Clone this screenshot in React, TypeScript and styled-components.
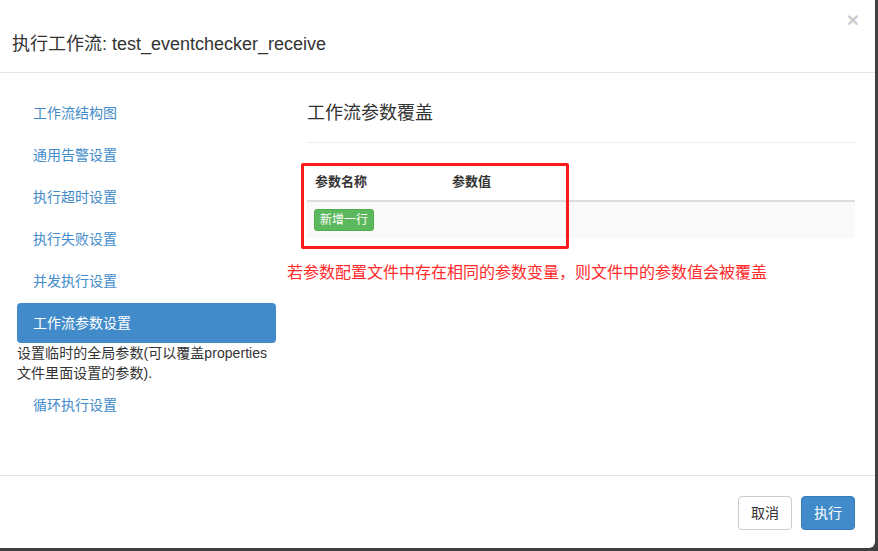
import React from "react";
import styled, { createGlobalStyle } from "styled-components";

const GlobalStyle = createGlobalStyle`
  html, body {
    margin: 0;
    padding: 0;
    background: #3f3f3f;
  }
  body {
    font-family: "Liberation Sans", "Noto Sans CJK SC", sans-serif;
    font-size: 14px;
    color: #333;
  }
`;

const navItems = [
  "工作流结构图",
  "通用告警设置",
  "执行超时设置",
  "执行失败设置",
  "并发执行设置",
  "工作流参数设置",
];

export default function App() {
  return (
    <>
      <GlobalStyle />
      <Modal>
        <Header>
          <Title>执行工作流: test_eventchecker_receive</Title>
          <Close>×</Close>
        </Header>
        <Body>
          <Side>
            {navItems.map((label) => (
              <NavItem key={label} active={label === "工作流参数设置"}>
                {label}
              </NavItem>
            ))}
            <Hint>
              设置临时的全局参数(可以覆盖properties
              <br />
              文件里面设置的参数).
            </Hint>
            <NavItem>循环执行设置</NavItem>
          </Side>
          <Main>
            <Heading>工作流参数覆盖</Heading>
            <Rule />
            <Table>
              <HeadRow>
                <Th>参数名称</Th>
                <Th>参数值</Th>
              </HeadRow>
              <BodyRow>
                <Td>
                  <AddButton>新增一行</AddButton>
                </Td>
                <Td />
              </BodyRow>
            </Table>
            <Marker />
            <Note>若参数配置文件中存在相同的参数变量，则文件中的参数值会被覆盖</Note>
          </Main>
        </Body>
        <Footer>
          <Button>取消</Button>
          <Button primary>执行</Button>
        </Footer>
      </Modal>
    </>
  );
}

const Modal = styled.div`
  width: 875px;
  height: 548px;
  background: #fff;
  border-radius: 0 0 6px 0;
  display: flex;
  flex-direction: column;
  overflow: hidden;
`;

const Header = styled.div`
  height: 72px;
  border-bottom: 1px solid #e5e5e5;
  display: flex;
  align-items: center;
  justify-content: space-between;
  padding: 0 18px 0 12px;
  box-sizing: content-box;
  position: relative;
`;

const Title = styled.h4`
  margin: 16px 0 0;
  font-size: 18px;
  font-weight: normal;
  line-height: 20px;
  color: #333;
`;

const Close = styled.span`
  position: absolute;
  right: 16px;
  top: 9px;
  font-size: 21px;
  font-weight: bold;
  line-height: 21px;
  color: #000;
  opacity: 0.2;
`;

const Body = styled.div`
  flex: 1;
  display: flex;
  padding: 20px 20px 0 17px;
  position: relative;
`;

const Side = styled.div`
  width: 259px;
  display: flex;
  flex-direction: column;
  gap: 2px;
`;

const NavItem = styled.div<{ active?: boolean }>`
  padding: 10px 16px;
  line-height: 20px;
  font-size: 14px;
  border-radius: 4px;
  color: ${({ active }) => (active ? "#fff" : "#428bca")};
  background: ${({ active }) => (active ? "#428bca" : "transparent")};
`;

const Hint = styled.div`
  font-size: 14px;
  line-height: 20px;
  color: #333;
  margin-top: -2px;
  letter-spacing: 0.05px;
`;

const Main = styled.div`
  flex: 1;
  margin-left: 30px;
  position: relative;
`;

const Heading = styled.h3`
  margin: 10px 0 0 1px;
  font-size: 18px;
  font-weight: normal;
  line-height: 20px;
  color: #333;
`;

const Rule = styled.div`
  margin-top: 19px;
  border-top: 1px solid #eee;
`;

const Table = styled.div`
  margin-top: 21px;
  margin-left: 1px;
`;

const HeadRow = styled.div`
  display: grid;
  grid-template-columns: 137px 1fr;
  border-bottom: 2px solid #ddd;
`;

const BodyRow = styled.div`
  display: grid;
  grid-template-columns: 137px 1fr;
  background: #f9f9f9;
  height: 36px;
  align-items: center;
`;

const Th = styled.div`
  padding: 8px;
  line-height: 20px;
  font-size: 13px;
  font-weight: bold;
  color: #333;
`;

const Td = styled.div`
  padding: 0 7px;
`;

const AddButton = styled.span`
  display: inline-block;
  background: #5cb85c;
  border: 1px solid #4cae4c;
  border-radius: 3px;
  color: #fff;
  font-size: 12px;
  line-height: 20px;
  padding: 0 5px;
`;

const Marker = styled.div`
  position: absolute;
  left: -5px;
  top: 70px;
  width: 262px;
  height: 80px;
  border: 3px solid #ff1a1a;
  border-radius: 2px;
`;

const Note = styled.div`
  position: absolute;
  left: -19px;
  top: 169px;
  font-size: 16px;
  line-height: 22px;
  color: #ff2a2a;
  white-space: nowrap;
`;

const Footer = styled.div`
  height: 72px;
  border-top: 1px solid #e5e5e5;
  display: flex;
  align-items: center;
  justify-content: flex-end;
  gap: 9px;
  padding: 0 20px;
`;

const Button = styled.button<{ primary?: boolean }>`
  font-family: "Liberation Sans", "Noto Sans CJK SC", sans-serif;
  font-size: 14px;
  line-height: 20px;
  padding: 6px 12px;
  border-radius: 4px;
  border: 1px solid ${({ primary }) => (primary ? "#357ebd" : "#ccc")};
  background: ${({ primary }) => (primary ? "#428bca" : "#fff")};
  color: ${({ primary }) => (primary ? "#fff" : "#333")};
  margin-top: 1px;
`;
